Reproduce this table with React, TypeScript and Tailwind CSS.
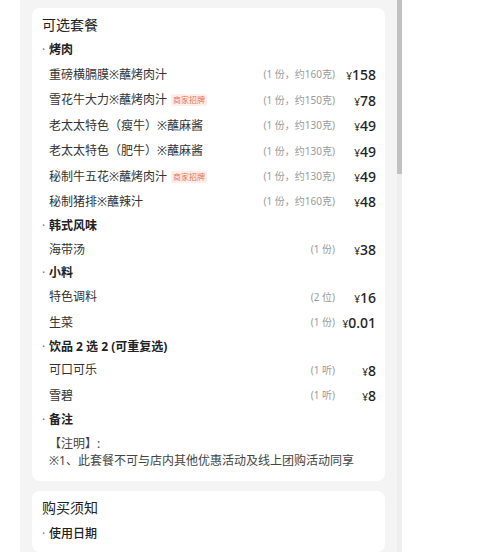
import React from 'react';

type Item = { name: string; qty: string; price: string; tag?: boolean };
type Group = { title: string; items: Item[] };

const groups: Group[] = [
  {
    title: '烤肉',
    items: [
      { name: '重磅横膈膜※蘸烤肉汁', qty: '(1 份，约160克)', price: '158' },
      { name: '雪花牛大力※蘸烤肉汁', qty: '(1 份，约150克)', price: '78', tag: true },
      { name: '老太太特色（瘦牛）※蘸麻酱', qty: '(1 份，约130克)', price: '49' },
      { name: '老太太特色（肥牛）※蘸麻酱', qty: '(1 份，约130克)', price: '49' },
      { name: '秘制牛五花※蘸烤肉汁', qty: '(1 份，约130克)', price: '49', tag: true },
      { name: '秘制猪排※蘸辣汁', qty: '(1 份，约160克)', price: '48' },
    ],
  },
  { title: '韩式风味', items: [{ name: '海带汤', qty: '(1 份)', price: '38' }] },
  {
    title: '小料',
    items: [
      { name: '特色调料', qty: '(2 位)', price: '16' },
      { name: '生菜', qty: '(1 份)', price: '0.01' },
    ],
  },
  {
    title: '饮品 2 选 2 (可重复选)',
    items: [
      { name: '可口可乐', qty: '(1 听)', price: '8' },
      { name: '雪碧', qty: '(1 听)', price: '8' },
    ],
  },
];

function Header({ title }: { title: string }) {
  return (
    <div className="flex h-[22.3px] items-center text-[12px] font-bold text-[#222]">
      <span className="w-[7px] font-normal text-[#777]">·</span>
      <span>{title}</span>
    </div>
  );
}

function Row({ item }: { item: Item }) {
  return (
    <div className="flex h-[25.4px] items-center pl-[7px]">
      <span className="text-[12px] text-[#333]">{item.name}</span>
      {item.tag && (
        <span className="ml-[4px] rounded-[2px] bg-[#fdeee8] px-[2px] text-[8px] leading-[12px] text-[#e8774f]">
          商家招牌
        </span>
      )}
      <span className="ml-auto text-[10px] text-[#9a9a9a]">{item.qty}</span>
      <span className="flex w-[41px] items-baseline justify-end text-[#222]">
        <span className="text-[10px]">¥</span>
        <span className="text-[14px] font-medium">{item.price}</span>
      </span>
    </div>
  );
}

export default function App() {
  return (
    <div
      className="flex h-[552px] w-[500px] overflow-hidden bg-white"
      style={{ fontFamily: '"Noto Sans", "Noto Sans CJK SC", sans-serif' }}
    >
      <div className="ml-[20px] flex w-[377px] flex-col gap-[10px] bg-[#f4f4f4] px-[12px] pt-[8px]">
        <div className="rounded-[8px] bg-white pl-[10px] pr-[9px] pt-[6px] pb-[12px]">
          <div className="h-[22px] text-[14px] leading-[22px] text-[#222]">可选套餐</div>
          <div className="mt-[3px]">
            {groups.map((g, i) => (
              <div key={g.title}>
                <Header title={g.title} />
                <div className={i === 0 ? 'mt-[1px]' : ''}>
                  {g.items.map((it) => (
                    <Row key={it.name} item={it} />
                  ))}
                </div>
              </div>
            ))}
            <Header title="备注" />
            <div className="mt-[4px] pl-[7px] text-[12px] leading-[17px] text-[#444]">
              <div>【注明】:</div>
              <div>※1、此套餐不可与店内其他优惠活动及线上团购活动同享</div>
            </div>
          </div>
        </div>
        <div className="h-[80px] rounded-[8px] bg-white pl-[10px] pr-[9px] pt-[6px]">
          <div className="h-[22px] text-[14px] leading-[22px] text-[#222]">购买须知</div>
          <div className="mt-[4px] flex h-[22px] items-center text-[12px] font-medium text-[#222]">
            <span className="w-[7px] font-normal text-[#777]">·</span>
            <span>使用日期</span>
          </div>
        </div>
      </div>
      <div className="flex w-[5px] flex-col bg-[#eeeeee]">
        <div className="h-[174px] bg-[#c1c1c1]" />
      </div>
    </div>
  );
}
